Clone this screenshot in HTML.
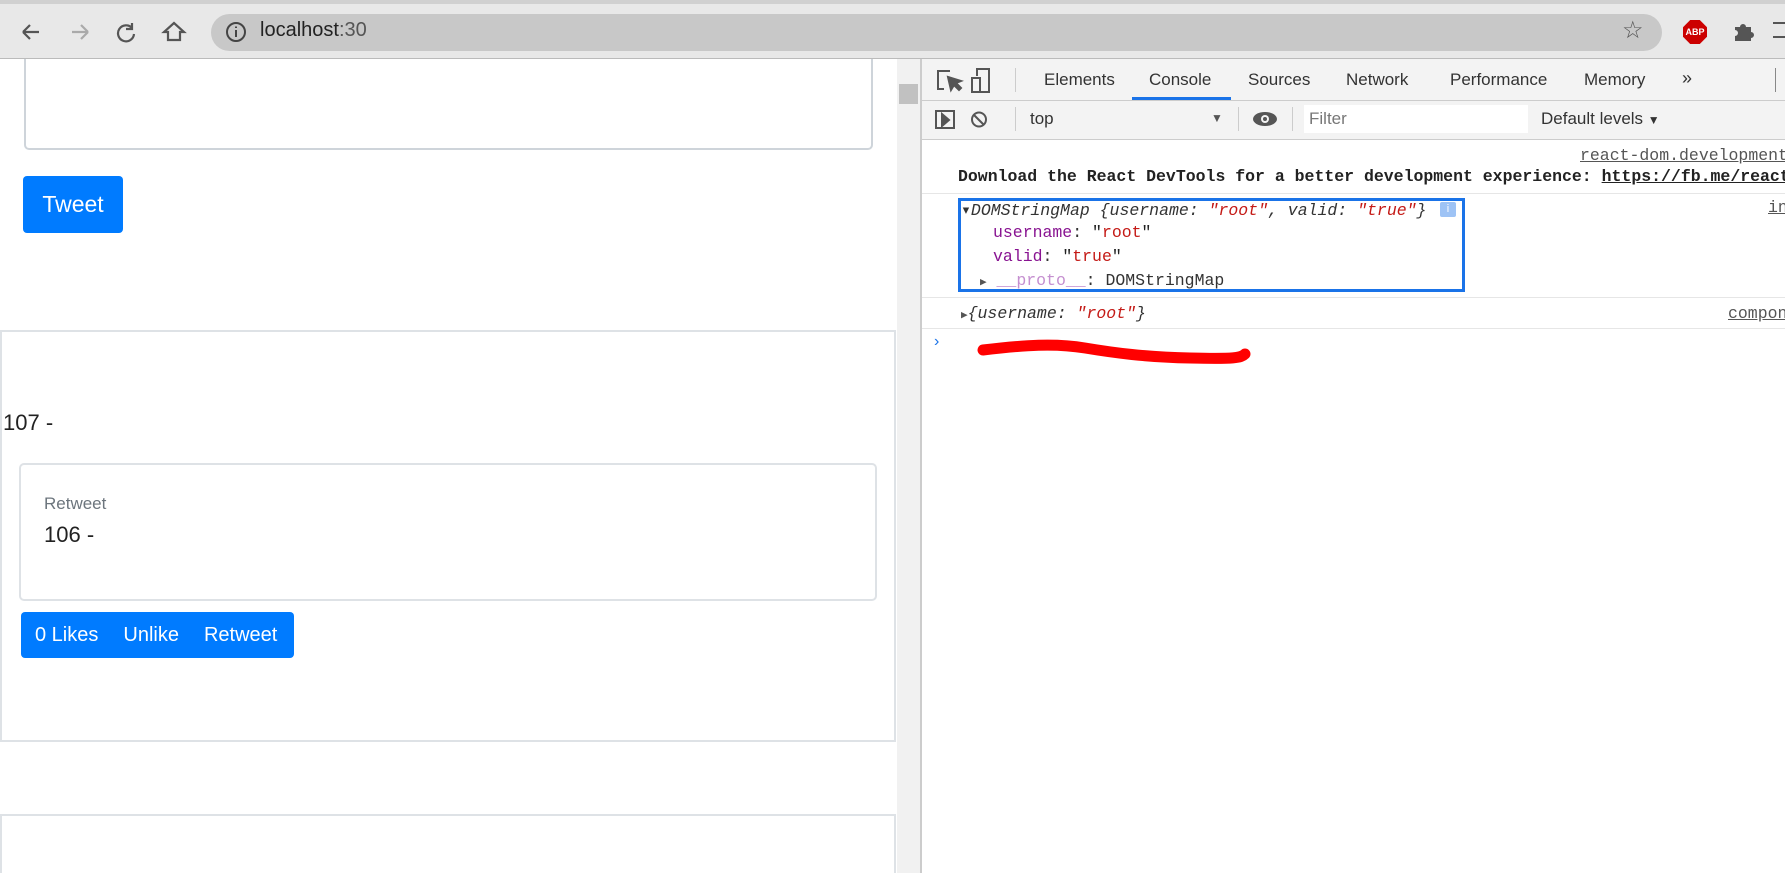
<!DOCTYPE html>
<html><head><meta charset="utf-8"><style>
*{box-sizing:border-box;margin:0;padding:0}
html{width:1785px;height:873px;overflow:hidden}
body{width:1785px;height:873px;overflow:hidden;background:#fff;font-family:"Liberation Sans",sans-serif;position:relative}
.a{position:absolute}
.mono{font-family:"Liberation Mono","DejaVu Sans Mono",monospace;font-size:16.5px;white-space:nowrap}
.tab{position:absolute;top:70px;font-size:17px;color:#333}
.btn{background:#007bff;color:#fff;border-radius:4px}
</style></head><body>
<div class="a" style="left:0;top:0;width:1785px;height:59px;background:#e8e8e8;border-bottom:1px solid #bbb"></div>
<div class="a" style="left:0;top:0;width:1785px;height:4px;background:#d0d0d0"></div>
<div class="a" style="left:211px;top:14px;width:1451px;height:37px;border-radius:19px;background:#c8c8c8"></div>
<svg class="a" style="left:18px;top:18px" width="200" height="30" viewBox="0 0 200 30" fill="none" stroke-width="2.2">
<path d="M5 14h16M5 14l7-7M5 14l7 7" stroke="#555"/>
<path d="M70 14h-16M70 14l-7-7M70 14l-7 7" stroke="#aaa"/>
<path d="M114 10a8 8 0 1 0 2 6M114 5v6h-6" stroke="#555"/>
<path d="M150 22v-8h-4l10-9 10 9h-4v8z" stroke="#555"/>
</svg>
<svg class="a" style="left:225px;top:21px" width="22" height="22"><circle cx="11" cy="11" r="9" fill="none" stroke="#444" stroke-width="2"/><path d="M11 9v7M11 5.5v1.5" stroke="#444" stroke-width="2"/></svg>
<div class="a" style="left:260px;top:19px;font-size:20px;color:#222">localhost<span style="color:#555">:30</span></div>
<div class="a" style="left:1622px;top:16px;font-size:24px;color:#555">☆</div>
<div class="a" style="left:1683px;top:20px;width:24px;height:24px;background:#c00;clip-path:polygon(30% 0,70% 0,100% 30%,100% 70%,70% 100%,30% 100%,0 70%,0 30%);color:#fff;font-size:9px;font-weight:bold;text-align:center;line-height:24px">ABP</div>
<svg class="a" style="left:1731px;top:19px" width="24" height="24"><path d="M4 8h5a3 3 0 1 1 6 0h5v5a3 3 0 1 1 0 6v3H4v-5a3 3 0 1 0 0-6z" fill="#555"/></svg>
<div class="a" style="left:1773px;top:22px;width:12px;height:16px;border-top:2px solid #555;border-bottom:2px solid #555"></div>
<div class="a" style="left:24px;top:59px;width:849px;height:91px;border:2px solid #ced4da;border-top:none;border-radius:0 0 5px 5px"></div>
<div class="a btn" style="left:23px;top:176px;width:100px;height:57px;font-size:23px;line-height:57px;text-align:center">Tweet</div>
<div class="a" style="left:0;top:330px;width:896px;height:412px;border:2px solid #dee2e6"></div>
<div class="a" style="left:3px;top:410px;font-size:22px;color:#222">107 -</div>
<div class="a" style="left:19px;top:463px;width:858px;height:138px;border:2px solid #dee2e6;border-radius:5px"></div>
<div class="a" style="left:44px;top:494px;font-size:17px;color:#6c757d">Retweet</div>
<div class="a" style="left:44px;top:522px;font-size:22px;color:#222">106 -</div>
<div class="a btn" style="left:21px;top:612px;width:273px;height:46px;font-size:20px;line-height:46px;padding-left:14px">0 Likes<span style="margin-left:25px">Unlike</span><span style="margin-left:25px">Retweet</span></div>
<div class="a" style="left:0;top:814px;width:896px;height:59px;border:2px solid #dee2e6;border-bottom:none"></div>
<div class="a" style="left:897px;top:59px;width:23px;height:814px;background:#f1f1f1"></div>
<div class="a" style="left:899px;top:84px;width:19px;height:20px;background:#c1c1c1"></div>
<div class="a" style="left:920px;top:59px;width:2px;height:814px;background:#ccc"></div>
<div class="a" style="left:922px;top:59px;width:863px;height:80px;background:#f3f3f3"></div>
<div class="a" style="left:922px;top:100px;width:863px;height:1px;background:#ccc"></div>
<div class="a" style="left:922px;top:139px;width:863px;height:1px;background:#ccc"></div>
<svg class="a" style="left:935px;top:66px" width="70" height="30" fill="none" stroke="#555" stroke-width="2"><path d="M15 5H3v18h6"/><path d="M13 11l3 13 3-5 5 5 2-2-5-5 5-2z" fill="#555"/><path d="M42 10V3h12v23h-9"/><rect x="37" y="12" width="8" height="14"/></svg>
<div class="a" style="left:1015px;top:68px;width:1px;height:24px;background:#ccc"></div>
<div class="tab" style="left:1044px">Elements</div>
<div class="tab" style="left:1149px">Console</div>
<div class="a" style="left:1132px;top:97px;width:99px;height:3px;background:#1a73e8"></div>
<div class="tab" style="left:1248px">Sources</div>
<div class="tab" style="left:1346px">Network</div>
<div class="tab" style="left:1450px">Performance</div>
<div class="tab" style="left:1584px">Memory</div>
<div class="tab" style="left:1682px;font-size:18px;top:68px">»</div>
<div class="a" style="left:1775px;top:68px;width:1px;height:24px;background:#888"></div>
<svg class="a" style="left:934px;top:108px" width="60" height="24" fill="none" stroke="#555" stroke-width="2"><rect x="2" y="3" width="18" height="17"/><path d="M8 6l7 6-7 6z" fill="#555"/><circle cx="45" cy="11.5" r="7"/><path d="M40 7l10 10"/></svg>
<div class="a" style="left:1015px;top:107px;width:1px;height:24px;background:#ccc"></div>
<div class="a" style="left:1030px;top:109px;font-size:17px;color:#333">top</div>
<div class="a" style="left:1211px;top:111px;font-size:12px;color:#555">▼</div>
<div class="a" style="left:1238px;top:107px;width:1px;height:24px;background:#ccc"></div>
<svg class="a" style="left:1252px;top:110px" width="26" height="18"><ellipse cx="13" cy="9" rx="12" ry="7" fill="#555"/><circle cx="13" cy="9" r="4" fill="#f3f3f3"/><circle cx="13" cy="9" r="2" fill="#555"/></svg>
<div class="a" style="left:1292px;top:107px;width:1px;height:24px;background:#ccc"></div>
<div class="a" style="left:1304px;top:105px;width:224px;height:28px;background:#fff;color:#777;font-size:17px;padding:4px 5px">Filter</div>
<div class="a" style="left:1541px;top:109px;font-size:17px;color:#333">Default levels <span style="font-size:12px">▼</span></div>
<div class="a mono" style="left:1580px;top:146px;color:#555;text-decoration:underline">react-dom.development</div>
<div class="a mono" style="left:958px;top:167px;color:#222;font-weight:bold">Download the React DevTools for a better development experience: <span style="text-decoration:underline">https://fb.me/react</span></div>
<div class="a" style="left:922px;top:193px;width:863px;height:1px;background:#e6e6e6"></div>
<div class="a mono" style="left:1768px;top:198px;color:#555;text-decoration:underline">in</div>
<div class="a" style="left:958px;top:198px;width:507px;height:94px;border:3px solid #1a73e8"></div>
<div class="a mono" style="left:961px;top:200px;color:#333;font-style:italic">▾DOMStringMap {username: <span style="color:#c41a16">"root"</span>, valid: <span style="color:#c41a16">"true"</span>}</div>
<div class="a" style="left:1440px;top:202px;width:16px;height:15px;background:#9ec3f5;border-radius:2px;color:#fff;font-size:11px;text-align:center;line-height:15px">i</div>
<div class="a mono" style="left:993px;top:223px;color:#881391">username<span style="color:#333">: </span><span style="color:#222">"</span><span style="color:#c41a16">root</span><span style="color:#222">"</span></div>
<div class="a mono" style="left:993px;top:247px;color:#881391">valid<span style="color:#333">: </span><span style="color:#222">"</span><span style="color:#c41a16">true</span><span style="color:#222">"</span></div>
<div class="a mono" style="left:980px;top:271px;color:#333"><span style="font-size:11px;color:#555">▶</span>  <span style="color:#c58fd0">__proto__</span>: DOMStringMap</div>
<div class="a" style="left:922px;top:297px;width:863px;height:1px;background:#e6e6e6"></div>
<div class="a mono" style="left:961px;top:304px;color:#333;font-style:italic"><span style="font-size:11px;font-style:normal;color:#555">▶</span>{username: <span style="color:#c41a16">"root"</span>}</div>
<div class="a mono" style="left:1728px;top:304px;color:#555;text-decoration:underline">compon</div>
<div class="a" style="left:922px;top:328px;width:863px;height:1px;background:#e6e6e6"></div>
<div class="a" style="left:934px;top:333px;color:#1a73e8;font-size:16px">›</div>
<svg class="a" style="left:975px;top:335px" width="290" height="35"><path d="M8 15C50 10 80 8 110 13S170 22 215 23 266 23 270 19" fill="none" stroke="#f00" stroke-width="11" stroke-linecap="round"/></svg>
</body></html>
